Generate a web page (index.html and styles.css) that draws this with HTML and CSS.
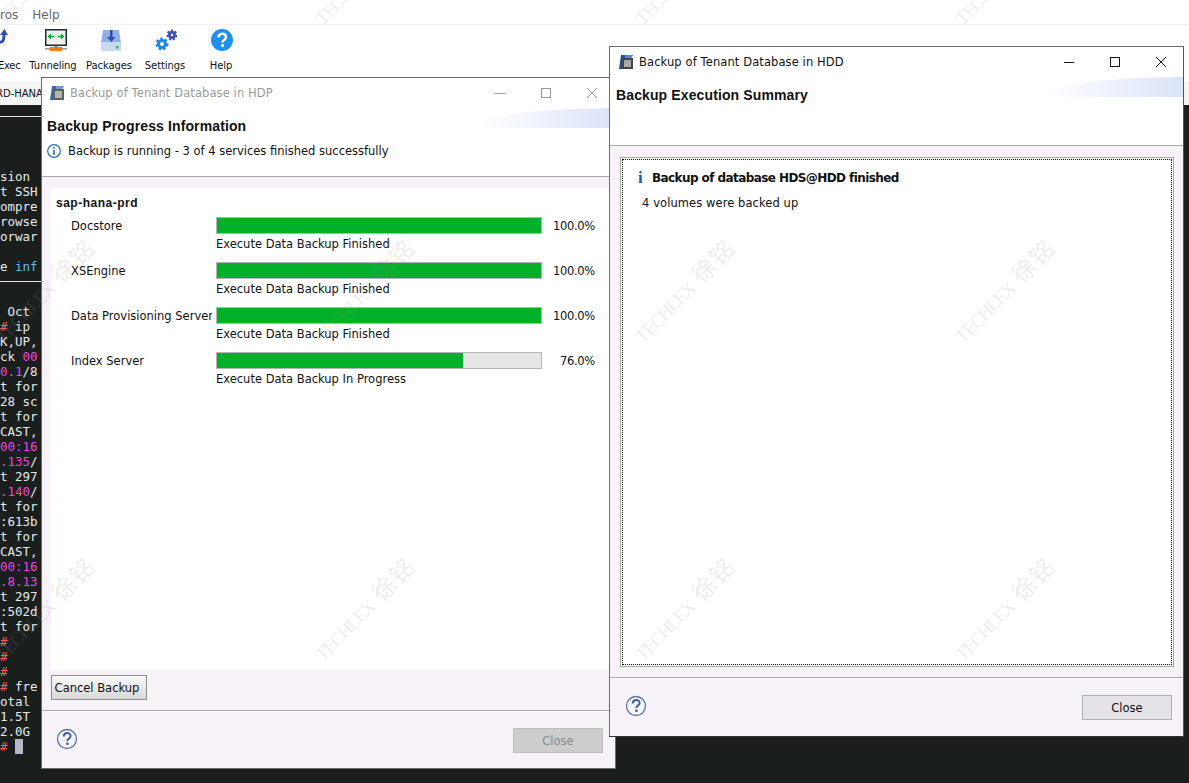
FILE: index.html
```html
<!DOCTYPE html>
<html lang="en">
<head>
<meta charset="utf-8">
<title>Backup</title>
<link rel="stylesheet" href="styles.css">
</head>
<body>
<div class="desktop">
  <header class="app-top">
    <nav class="menu"><span>ros</span><span>Help</span></nav>
    <div class="tools">
      <div class="tool tool-exec">
        <svg width="12" height="24" viewBox="0 0 12 24"><path d="M0 13c4 1 6-1 6-6V4" fill="none" stroke="#2b4fb8" stroke-width="3"/><path d="M2 6L6.500 0 10 6z" fill="#2b4fb8"/></svg>
        <span>Exec</span>
      </div>
      <div class="tool tool-tunnel">
        <svg width="22" height="24" viewBox="0 0 22 24"><rect x=".75" y=".75" width="20.500" height="15.500" fill="#e9f1f2" stroke="#1f2a2a" stroke-width="1.500"/><path d="M4 7.500h5M13 7.500h5" stroke="#0aa52a" stroke-width="1.500"/><path d="M2.500 7.500L6 4.500v6zM19.500 7.500L16 4.500v6z" fill="#0aa52a"/><rect x="0" y="19" width="22" height="1.500" fill="#999"/><rect x="10" y="17" width="2" height="2" fill="#777"/><rect x="5" y="18" width="12" height="4" fill="#f47a20"/></svg>
        <span>Tunneling</span>
      </div>
      <div class="tool tool-pack">
        <svg width="22" height="24" viewBox="0 0 22 24"><path d="M3 1h16l2 13H1z" fill="#8fb0e4"/><rect x="1" y="13" width="20" height="9" rx="1" fill="#c9d8f3"/><rect x="16" y="17" width="2.500" height="2.500" fill="#27c24c"/><path d="M10 1h2.500v9H10z" fill="#2c4ca8"/><path d="M7 8h8.500l-4.200 5z" fill="#2c4ca8"/></svg>
        <span>Packages</span>
      </div>
      <div class="tool tool-set">
        <svg width="22" height="24" viewBox="0 0 22 24"><circle cx="7" cy="15" r="3.500" fill="none" stroke="#1e88e5" stroke-width="3"/><circle cx="7" cy="15" r="5.500" fill="none" stroke="#1e88e5" stroke-width="2" stroke-dasharray="2.500 2.200"/><circle cx="17" cy="6" r="2.600" fill="none" stroke="#3f51b5" stroke-width="2.800"/><circle cx="17" cy="6" r="4.500" fill="none" stroke="#3f51b5" stroke-width="2" stroke-dasharray="2.200 1.700"/></svg>
        <span>Settings</span>
      </div>
      <div class="tool tool-help">
        <svg width="22" height="24" viewBox="0 0 22 24"><circle cx="11" cy="11" r="11" fill="#1e90f5"/><path d="M7.500 8.500c0-5 7.500-5 7.500-.5 0 3-3.500 3-3.500 5.500" fill="none" stroke="#fff" stroke-width="2.500"/><rect x="10" y="15" width="3" height="3" fill="#fff"/></svg>
        <span>Help</span>
      </div>
    </div>
    <div class="tabs"><span>RD-HANA</span></div>
  </header>

  <pre class="term"><code>



sion
t SSH
ompre
rowse
orwar

e <b class="t-blue">inf</b>


 Oct
<b class="t-red">#</b> ip
K,UP,
ck <b class="t-pink">00</b>
<b class="t-pink">0.1</b>/8
t for
28 sc
t for
CAST,
<b class="t-pink">00:16</b>
<b class="t-pink">.135</b>/
t 297
<b class="t-pink">.140</b>/
t for
:613b
t for
CAST,
<b class="t-pink">00:16</b>
<b class="t-pink">.8.13</b>
t 297
:502d
t for
<b class="t-red">#</b>
<b class="t-red">#</b>
<b class="t-red">#</b>
<b class="t-red">#</b> fre
otal
1.5T
2.0G
<b class="t-red">#</b> <i class="t-cursor"> </i></code></pre>
  <div class="rule rule-a"></div>
  <div class="rule rule-b"></div>

  <section class="win win-left">
    <div class="titlebar inactive">
      <svg class="appicon" width="14" height="14" viewBox="0 0 14 14"><path d="M2 0h12l-2 3H3v11H0z" fill="#1f4f96"/><path d="M6 0h8l-2 3H6z" fill="#5a86c4"/><rect x="3" y="3" width="11" height="11" fill="#444"/><rect x="5" y="5" width="7" height="7" fill="#a8a8a8"/></svg>
      <span class="title">Backup of Tenant Database in HDP</span>
      <div class="controls">
        <svg width="12" height="12" viewBox="0 0 12 12"><path d="M1 6.500h10" stroke="currentColor"/></svg>
        <svg width="12" height="12" viewBox="0 0 12 12"><rect x="1.500" y="1.500" width="9" height="9" fill="none" stroke="currentColor"/></svg>
        <svg width="12" height="12" viewBox="0 0 12 12"><path d="M1 1l10 10M11 1L1 11" stroke="currentColor"/></svg>
      </div>
    </div>
    <div class="head">
      <div class="swoosh"></div>
      <h1>Backup Progress Information</h1>
      <p class="status">
        <svg width="14" height="14" viewBox="0 0 14 14"><circle cx="7" cy="7" r="6.300" fill="#fff" stroke="#1c6fb8" stroke-width="1.200"/><rect x="6.200" y="3" width="1.600" height="1.600" fill="#1c6fb8"/><rect x="6.200" y="5.800" width="1.600" height="5" fill="#1c6fb8"/></svg>
        <span>Backup is running - 3 of 4 services finished successfully</span>
      </p>
    </div>
    <div class="body">
      <div class="sheet">
        <h2>sap-hana-prd</h2>
        <div class="svc">
          <div class="svc-name">Docstore</div>
          <div class="svc-bar"><div class="bar"><div class="fill" style="width:100%"></div></div><div class="svc-msg">Execute Data Backup Finished</div></div>
          <div class="svc-pct">100.0%</div>
        </div>
        <div class="svc">
          <div class="svc-name">XSEngine</div>
          <div class="svc-bar"><div class="bar"><div class="fill" style="width:100%"></div></div><div class="svc-msg">Execute Data Backup Finished</div></div>
          <div class="svc-pct">100.0%</div>
        </div>
        <div class="svc">
          <div class="svc-name">Data Provisioning Server</div>
          <div class="svc-bar"><div class="bar"><div class="fill" style="width:100%"></div></div><div class="svc-msg">Execute Data Backup Finished</div></div>
          <div class="svc-pct">100.0%</div>
        </div>
        <div class="svc">
          <div class="svc-name">Index Server</div>
          <div class="svc-bar"><div class="bar"><div class="fill" style="width:76%"></div></div><div class="svc-msg">Execute Data Backup In Progress</div></div>
          <div class="svc-pct">76.0%</div>
        </div>
      </div>
      <div class="cancel-row"><button class="btn">Cancel Backup</button></div>
    </div>
    <footer class="foot">
      <svg class="q" width="22" height="22" viewBox="0 0 22 22"><circle cx="11" cy="11" r="9.500" fill="#f2f4fa" stroke="#5f77a0" stroke-width="1.300"/><path d="M7.800 8.500c0-4.500 6.800-4.500 6.800-.5 0 2.700-3.300 2.500-3.300 5" fill="none" stroke="#4a5f8c" stroke-width="2"/><rect x="10.200" y="14.500" width="2.400" height="2.400" fill="#4a5f8c"/></svg>
      <button class="btn-close disabled">Close</button>
    </footer>
  </section>

  <section class="win win-right">
    <div class="titlebar">
      <svg class="appicon" width="14" height="14" viewBox="0 0 14 14"><path d="M2 0h12l-2 3H3v11H0z" fill="#1f4f96"/><path d="M6 0h8l-2 3H6z" fill="#5a86c4"/><rect x="3" y="3" width="11" height="11" fill="#444"/><rect x="5" y="5" width="7" height="7" fill="#a8a8a8"/></svg>
      <span class="title">Backup of Tenant Database in HDD</span>
      <div class="controls">
        <svg width="12" height="12" viewBox="0 0 12 12"><path d="M1 6.500h10" stroke="currentColor"/></svg>
        <svg width="12" height="12" viewBox="0 0 12 12"><rect x="1.500" y="1.500" width="9" height="9" fill="none" stroke="currentColor"/></svg>
        <svg width="12" height="12" viewBox="0 0 12 12"><path d="M1 1l10 10M11 1L1 11" stroke="currentColor"/></svg>
      </div>
    </div>
    <div class="head">
      <div class="swoosh"></div>
      <h1>Backup Execution Summary</h1>
    </div>
    <div class="body">
      <div class="summary">
        <div class="summary-in">
          <div class="sum-title"><span class="i">i</span><strong>Backup of database HDS@HDD finished</strong></div>
          <p>4 volumes were backed up</p>
        </div>
      </div>
    </div>
    <footer class="foot">
      <svg class="q" width="22" height="22" viewBox="0 0 22 22"><circle cx="11" cy="11" r="9.500" fill="#f2f4fa" stroke="#5f77a0" stroke-width="1.300"/><path d="M7.800 8.500c0-4.500 6.800-4.500 6.800-.5 0 2.700-3.300 2.500-3.300 5" fill="none" stroke="#4a5f8c" stroke-width="2"/><rect x="10.200" y="14.500" width="2.400" height="2.400" fill="#4a5f8c"/></svg>
      <button class="btn-close">Close</button>
    </footer>
  </section>

  <div class="marks" aria-hidden="true">
    <span>TECHLEX <b>徐铭</b></span><span>TECHLEX <b>徐铭</b></span><span>TECHLEX <b>徐铭</b></span><span>TECHLEX <b>徐铭</b></span>
    <span>TECHLEX <b>徐铭</b></span><span>TECHLEX <b>徐铭</b></span><span>TECHLEX <b>徐铭</b></span><span>TECHLEX <b>徐铭</b></span>
    <span>TECHLEX <b>徐铭</b></span><span>TECHLEX <b>徐铭</b></span><span>TECHLEX <b>徐铭</b></span><span>TECHLEX <b>徐铭</b></span>
  </div>
</div>
</body>
</html>
```
FILE: styles.css
```css
* { box-sizing: border-box; }
html, body { margin: 0; padding: 0; }
body { font-family: "DejaVu Sans", sans-serif; }
.desktop {
  position: relative;
  width: 1189px;
  height: 783px;
  overflow: hidden;
  background: #1a1f1d;
  font-size: 11px;
  color: #111;
}

.app-top { background: #fff; height: 105px; position: relative; }
.menu { height: 25px; border-bottom: 1px solid #f0f0f0; display: flex; gap: 14px; padding: 8px 0 0 0; font-size: 12px; line-height: 14px; color: #666; }
.tools { height: 56px; position: relative; }
.tool { position: absolute; top: 4px; display: flex; flex-direction: column; align-items: center; gap: 7px; font-size: 10px; line-height: 12px; letter-spacing: -.08px; color: #111; white-space: nowrap; }
.tool svg { display: block; flex: none; }
.tool-exec { left: -2px; width: 26px; align-items: flex-start; }
.tool-exec span { margin-left: 0; letter-spacing: -.3px; }
.tool-tunnel { left: 30px; width: 46px; }
.tool-tunnel svg { margin-left: 3px; margin-right: -3px; }
.tool-pack { left: 86px; width: 46px; }
.tool-pack svg { margin-left: 3px; }
.tool-set { left: 145px; width: 40px; }
.tool-set svg { margin-left: 2px; }
.tool-help { left: 200px; width: 42px; }
.tool-help svg { margin-left: 2px; }
.tabs { position: absolute; left: 0; right: 0; top: 81px; height: 24px; background: #f4f4f4; font-size: 10px; padding: 7px 0 0 0; color: #111; }
.tabs span { margin-left: -4px; display: inline-block; }

.term {
  margin: 0;
  position: absolute;
  left: 0;
  top: 109px;
  width: 41px;
  overflow: hidden;
  font: 12.500px/15px "DejaVu Sans Mono", monospace;
  color: #e8e8e8;
}
.term b { font-weight: normal; }
.t-blue { color: #58c0f0; }
.t-pink { color: #f040e0; }
.t-red { color: #f06050; }
.t-cursor { display: inline-block; width: 8px; height: 15px; background: #b4b8c8; vertical-align: top; }
.rule { position: absolute; left: 0; width: 41px; height: 1px; background: #e4e4e4; }
.rule-a { top: 116px; }
.rule-b { top: 281px; }

.win {
  position: absolute;
  width: 575px;
  background: #f6f2f7;
  border: 1px solid #6c6c6c;
  display: flex;
  flex-direction: column;
}
.win-left { left: 41px; top: 77px; height: 692px; }
.win-right { left: 609px; top: 46px; height: 691px; border-right-color: #555; border-bottom-color: #333; }

.titlebar { height: 30px; background: #fff; display: flex; align-items: center; padding-left: 9px; color: #111; flex: none; }
.titlebar.inactive { color: #9a9a9a; padding-left: 8px; }
.appicon { flex: none; }
.title { margin-left: 6px; font-size: 11.500px; letter-spacing: .1px; }
.titlebar.inactive .appicon { opacity: .85; }
.controls { margin-left: auto; display: flex; gap: 34px; padding-right: 17px; }
.win-right .controls { padding-right: 16px; }
.controls svg { display: block; }

.head { position: relative; background: #fff; height: 69px; border-bottom: 1px solid #a8a8a8; padding: 10px 5px 0; flex: none; overflow: hidden; }
.win-right .head { padding-left: 6px; }
h1 { margin: 0; font-size: 14px; font-weight: 700; line-height: 16px; letter-spacing: .12px; color: #111; font-family: "Liberation Sans", sans-serif; }
.swoosh { position: absolute; right: 0; top: 0; width: 140px; height: 20px; background: linear-gradient(90deg, #fff 0%, #f3f6fe 35%, #dbe3f8 100%); clip-path: ellipse(100% 100% at 100% 100%); }
.status { margin: 10px 0 0; display: flex; align-items: center; gap: 7px; line-height: 14px; font-size: 11.500px; }

.body { flex: 1; min-height: 0; padding: 11px 6px 0 9px; display: flex; flex-direction: column; }
.sheet { flex: 1; background: #fff; padding: 7px 0 0 5px; }
h2 { margin: 0; font-size: 12px; font-weight: 700; line-height: 16px; letter-spacing: .5px; font-family: "Liberation Sans", sans-serif; }
.svc { display: grid; grid-template-columns: 145px 326px 53px; height: 45px; padding-left: 15px; padding-top: 6px; line-height: 16px; font-size: 11.500px; }
.svc-name { overflow: hidden; white-space: nowrap; padding-top: 1px; margin-right: 4px; }
.svc-bar { display: flex; flex-direction: column; }
.bar { height: 17px; background: #e6e6e6; border: 1px solid #b5b5b5; flex: none; }
.fill { height: 100%; background: #02b029; }
.svc-msg { margin-top: 2px; }
.svc-pct { text-align: right; padding-top: 1px; letter-spacing: -.3px; }
.cancel-row { height: 40px; padding-top: 5px; flex: none; }
.btn { height: 25px; width: 96px; padding: 0 4px 0 0; margin: 0; background: linear-gradient(#fafafa, #d8d8d8); border: 1px solid #8f8f8f; font: 11.500px "DejaVu Sans", sans-serif; color: #111; }

.foot { height: 58px; flex: none; border-top: 1px solid #a8a8a8; box-shadow: inset 0 1px 0 #fff; display: flex; align-items: center; justify-content: space-between; padding: 0 11px 0 14px; }
.q { margin-bottom: 2px; }
.win-left .foot { padding-right: 12px; }
.btn-close { width: 90px; height: 25px; margin-top: 2px; padding: 0; background: #e6e3e8; border: 1px solid #b0b0b0; font: 11.500px "DejaVu Sans", sans-serif; color: #111; }
.btn-close.disabled { background: #cdcdcd; border-color: #bcbcbc; color: #8a8a8a; }

.win-right .body { padding: 11px 9px 10px 10px; }
.win-right .foot { padding-left: 15px; height: 59px; }
.win-right .btn-close { margin-top: 1px; }
.summary { flex: 1; background: #fff; border: 1px solid #a8a8a8; padding: 1px; }
.summary-in { height: 100%; border: 1px dotted #111; padding: 10px 15px; }
.sum-title { display: flex; align-items: center; gap: 9px; line-height: 16px; }
.sum-title strong { font-size: 12px; font-family: "DejaVu Sans", sans-serif; font-weight: 700; letter-spacing: -.58px; }
.i { color: #1c5fa8; font: 700 17px/16px "Liberation Serif", serif; width: 5px; }
.summary-in p { margin: 9px 0 0 4px; font-size: 11.500px; line-height: 16px; letter-spacing: .08px; }

.marks { position: absolute; left: 69px; top: -104px; display: grid; grid-template-columns: repeat(4, 320px); grid-auto-rows: 318px; pointer-events: none; z-index: 5; }
.marks span { display: block; width: 180px; transform: rotate(-45deg); transform-origin: center; white-space: nowrap; font: 19px "Liberation Serif", "Noto Sans CJK SC", serif; color: rgba(150,150,150,.18); letter-spacing: -1.500px; }
.marks b { font: 24px "Noto Sans CJK SC", serif; letter-spacing: 1px; margin-left: 4px; }
```
